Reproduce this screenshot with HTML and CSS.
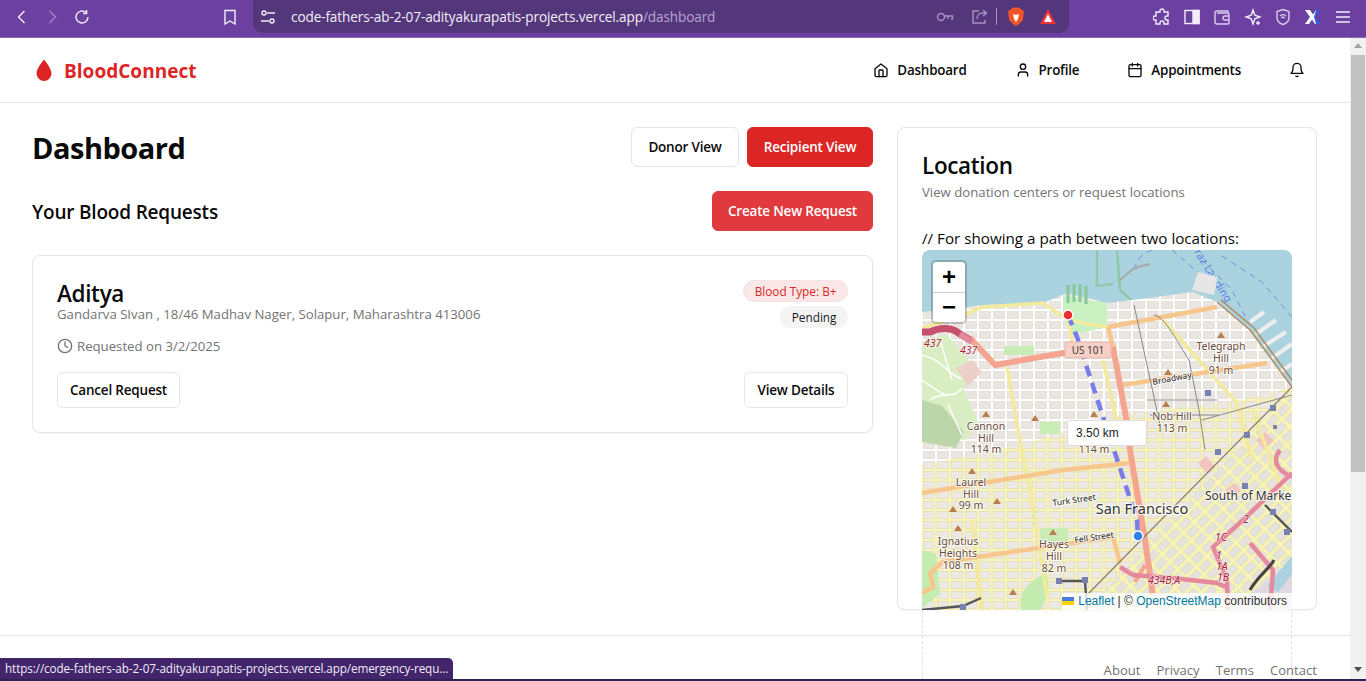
FILE: index.html
```html
<!DOCTYPE html>
<html lang="en">
<head>
<meta charset="utf-8">
<title>BloodConnect Dashboard</title>
<link rel="stylesheet" href="styles.css">
</head>
<body>
<div class="window">
  <div class="chrome">
    <div class="chrome-nav">
      <svg class="ci" viewBox="0 0 18 18"><path d="M11.5 3 5.5 9l6 6"/></svg>
      <svg class="ci dim" viewBox="0 0 18 18"><path d="M6.5 3l6 6-6 6"/></svg>
      <svg class="ci" viewBox="0 0 18 18"><path d="M15 9a6 6 0 1 1-2-4.5"/><path d="M13.5 2v3.5H10" class="solid"/></svg>
    </div>
    <svg class="ci bookmark" viewBox="0 0 18 18"><path d="M4 2.5h10v13.5l-5-3-5 3z"/></svg>
    <div class="omnibox">
      <svg class="ci tune" viewBox="0 0 18 18"><circle cx="5" cy="5" r="2"/><path d="M8 5h8M2 13h8"/><circle cx="13" cy="13" r="2"/></svg>
      <span class="url">code-fathers-ab-2-07-adityakurapatis-projects.vercel.app<span class="url-dim">/dashboard</span></span>
      <div class="omni-right">
        <svg class="ci dim2" viewBox="0 0 18 18"><circle cx="5" cy="9" r="3.5"/><path d="M8.5 8h8v3h-1.5M12 8v3"/></svg>
        <svg class="ci dim2 share" viewBox="0 0 18 18"><path d="M9 3H3v12h12v-3M7 11c0-4 3-6 6-6h3M13 2l3.500 3-3.500 3"/></svg>
        <span class="sep"></span>
        <svg class="brave" viewBox="0 0 18 20"><path d="M3 3l3-2.500h6l3 2.500 2 1-1 9-4 4-3 2-3-2-4-4-1-9z" fill="#f0562a"/><path d="M6 7l3 1 3-1-1 5-2 3-2-3z" fill="#fff"/></svg>
        <svg class="tri" viewBox="0 0 18 18"><path d="M9 1l8 15H1z" fill="#e8343a"/><path d="M9 6l4 8H5z" fill="#fff"/></svg>
      </div>
    </div>
    <div class="chrome-tools">
      <svg class="ci" viewBox="0 0 18 18"><path d="M7 3a2 2 0 0 1 4 0v1h4v4h-1a2 2 0 0 0 0 4h1v4h-4v-1a2 2 0 0 0-4 0v1H3v-4H2a2 2 0 0 1 0-4h1V4h4z"/></svg>
      <svg class="ci" viewBox="0 0 18 18"><rect x="2" y="2.500" width="14" height="13"/><rect x="10" y="2.500" width="6" height="13" class="fill"/></svg>
      <svg class="ci dim3" viewBox="0 0 18 18"><path d="M15 5V3H4a2 2 0 0 0-2 2v9a2 2 0 0 0 2 2h11a1 1 0 0 0 1-1V6a1 1 0 0 0-1-1H4"/><path d="M16 8h-4a2 2 0 0 0 0 4h4"/></svg>
      <svg class="ci" viewBox="0 0 18 18"><path d="M9 2l1.800 5.200L16 9l-5.200 1.800L9 16l-1.800-5.200L2 9l5.200-1.800zM14 13v4M12 15h4"/></svg>
      <svg class="ci dim3" viewBox="0 0 18 18"><path d="M9 1.500l6 2v6c0 3.500-3 6-6 7-3-1-6-3.500-6-7v-6z"/><path d="M6 8a4 4 0 0 1 6 0M7.500 10a2 2 0 0 1 3 0"/></svg>
      <svg class="xlogo" viewBox="0 0 18 18"><path d="M1 2h5l3 4.500L12 2h3l-5 7 5 7h-4L8 11.500 5 16H1l5-7z" fill="#fff"/><path d="M12 2h4l-4 7 4 7h-4l-2-7z" fill="#3a5bd9"/></svg>
      <svg class="ci" viewBox="0 0 18 18"><path d="M2 4h14M2 9h14M2 14h14"/></svg>
    </div>
  </div>

  <div class="viewport">
    <div class="page">
      <header class="site-header">
        <div class="brand">
          <svg class="drop" viewBox="0 0 24 24"><path d="M12 1.500C12 1.500 4.500 10 4.500 15.500a7.500 7.500 0 0 0 15 0C19.500 10 12 1.500 12 1.500z"/></svg>
          <span>BloodConnect</span>
        </div>
        <nav class="nav">
          <a class="nav-link"><svg class="lucide" viewBox="0 0 24 24"><path d="m3 10 9-7 9 7v10a2 2 0 0 1-2 2H5a2 2 0 0 1-2-2z"/><path d="M9 22v-9a1 1 0 0 1 1-1h4a1 1 0 0 1 1 1v9"/></svg>Dashboard</a>
          <a class="nav-link"><svg class="lucide" viewBox="0 0 24 24"><circle cx="12" cy="7" r="4"/><path d="M19 21v-2a4 4 0 0 0-4-4H9a4 4 0 0 0-4 4v2"/></svg>Profile</a>
          <a class="nav-link"><svg class="lucide" viewBox="0 0 24 24"><rect x="3" y="4" width="18" height="18" rx="2"/><path d="M8 2v4M16 2v4M3 10h18"/></svg>Appointments</a>
          <svg class="lucide bell" viewBox="0 0 24 24"><path d="M6 8a6 6 0 0 1 12 0c0 7 3 9 3 9H3s3-2 3-9"/><path d="M10.300 21a1.940 1.940 0 0 0 3.400 0"/></svg>
        </nav>
      </header>

      <main class="main">
        <section class="left">
          <div class="row title-row">
            <h1>Dashboard</h1>
            <div class="btn-group">
              <button class="btn outline tall donor">Donor View</button>
              <button class="btn solid tall recipient">Recipient View</button>
            </div>
          </div>
          <div class="row requests-row">
            <h2>Your Blood Requests</h2>
            <button class="btn solid-light tall create">Create New Request</button>
          </div>
          <article class="request">
            <div class="request-top">
              <div>
                <h3>Aditya</h3>
                <p class="address">Gandarva SIvan , 18/46 Madhav Nager, Solapur, Maharashtra 413006</p>
              </div>
              <div class="badges">
                <span class="badge red">Blood Type: B+</span>
                <span class="badge gray">Pending</span>
              </div>
            </div>
            <p class="when"><svg class="lucide clock" viewBox="0 0 24 24"><circle cx="12" cy="12" r="10"/><path d="M12 6v6l4 2"/></svg>Requested on 3/2/2025</p>
            <div class="row request-actions">
              <button class="btn outline short cancel">Cancel Request</button>
              <button class="btn outline short details">View Details</button>
            </div>
          </article>
        </section>

        <aside class="location">
          <h3 class="loc-title">Location</h3>
          <p class="loc-sub">View donation centers or request locations</p>
          <p class="loc-note">// For showing a path between two locations:</p>
          <div class="map">
            <svg class="map-svg" viewBox="0 0 370 360">
              <defs>
                <pattern id="gridWhite" width="14" height="10" patternUnits="userSpaceOnUse">
                  <rect width="14" height="10" fill="#ffffff"/>
                  <rect x="1.500" y="1.500" width="11" height="7" fill="#e9e5df" stroke="#d9d0c9" stroke-width=".5"/>
                </pattern>
                <pattern id="gridYellow" width="14" height="10" patternUnits="userSpaceOnUse">
                  <rect width="14" height="10" fill="#f7f4b4"/>
                  <rect x="1.500" y="1.500" width="11" height="7" fill="#ece8e2" stroke="#d9d0c9" stroke-width=".5"/>
                </pattern>
                <pattern id="gridDiag" width="15" height="11" patternUnits="userSpaceOnUse" patternTransform="rotate(-45)">
                  <rect width="15" height="11" fill="#f7f4b4"/>
                  <rect x="2" y="2" width="11" height="7" fill="#e6e3dd" stroke="#d5cdc6" stroke-width=".5"/>
                </pattern>
              </defs>
              <rect width="370" height="360" fill="#aad3df"/>
              <g class="ferry">
                <path d="M230 0c-14 6-20 14-14 24M280 10l30 30 15 30M300 6l40 26 30 35M250 0l28 24"/>
              </g>
              <text class="bay" transform="translate(272 2) rotate(58)">raz Landing</text>
              <path d="M175 0v36M195 0l3 40M175 36l16-2M198 40l22 20" class="breakwater"/>
              <path d="M198 30l14-12 16-4" class="pier"/>
              <path d="M270 40l6-18 20 5-4 18z" fill="#e6e6e6"/>
              <g class="docks">
                <path d="M328 72l14-10M334 84l20-14M342 96l22-14M350 108l20-14M358 122l12-8"/>
              </g>
              <path d="M0 62 61 55 121 53 145 43 185 53 211 50 271 42 295 52 328 80 370 137V360H0z" fill="url(#gridWhite)"/>
              <path d="M0 215 100 195 200 165 320 150 370 137V360H0z" fill="url(#gridYellow)"/>
              <path d="M165 360 370 140V360z" fill="url(#gridDiag)"/>
              <path d="M141 45l44 8v24l-36 8-8-20z" fill="#c8f0c0"/>
              <path d="M146 35v18M152 34v18M158 34v18M164 36v18" class="pier-green"/>
              <path d="M0 92l24-8 26 30-8 26 14 32-12 18-44-6z" fill="#d8eec2"/>
              <path d="M0 150l20 6 22 26-8 16-34-6z" fill="#bcd6aa"/>
              <path d="M34 118l16-8 10 12-14 14z" fill="#eccfc9"/>
              <path d="M0 105c20 4 26 20 40 24M8 150c14-10 24 0 32-12M18 90l12 40M40 185l-14-30M0 130l24 16" class="white-road"/>
              <path d="M82 96h30v9H82zM118 278h28v14h-28zM118 172h20v12h-20z" fill="#c9ebb6"/>
              <path d="M0 300l14 4 4 40-18 14zM98 350c4-14 14-22 26-26 6 12 0 26-6 36H99z" fill="#c4ecb0"/>
              <path d="M334 190l10-8 8 9-10 8zM276 213l8-7 9 11-8 7zM303 240l9-7 7 8-9 7z" fill="#f1c4c0"/>
              <path d="M310 360l60-50v50z" fill="#dfd9e2"/>
              <path d="M345 336l25-30v18l-14 18z" fill="#aad3df"/>

              <g class="yellow-road">
                <path d="M0 78 38 66 61 57 121 53 143 68 160 73 186 77"/>
                <path d="M85 117 98 190 108 240 125 347"/>
                <path d="M181 110 198 187"/>
                <path d="M241 70 315 153 330 210"/>
                <path d="M330 160 360 240"/>
                <path d="M146 70 152 100"/>
                <path d="M60 360 50 270"/>
              </g>
              <g class="orange-road">
                <path d="M186 77 295 57"/>
                <path d="M200 135 345 113"/>
                <path d="M0 243 141 220 208 213"/>
                <path d="M0 343 11 337 8 323 21 312 191 287 198 313"/>
              </g>
              <path d="M48 88 73 115 141 103 191 97 205 173 208 200 223 290 231 345" class="salmon-road"/>
              <path d="M186 77 191 97" class="orange-link"/>
              <path d="M223 315 213 332" class="salmon-thin"/>
              <path d="M0 82h8c10-5 22-5 30 2l10 6" class="moto-dark"/>
              <path d="M38 84 50 92" class="moto"/>
              <g class="moto">
                <path d="M370 223 321 270 291 297 305 330 306 360"/>
                <path d="M358 200c-8 10-4 20 12 27"/>
                <path d="M198 317 211 325 250 328 295 333 306 338"/>
                <path d="M328 293 351 320 348 360"/>
              </g>
              <g class="rail">
                <path d="M295 52 328 80 370 137"/>
                <path d="M299 50 332 78 370 130"/>
              </g>
              <path d="M165 345 370 137" class="diagonal-tan"/>
              <g class="transit-thin">
                <path d="M212 55l26 120M232 65c10 0 25 30 35 45l10 50 6 40M225 150h70M228 165h68M280 170l90-25"/>
              </g>
              <g class="transit">
                <path d="M343 255 370 282M137 331H163M163 331 165 360M0 360l41-4 18-8"/>
                <path d="M328 340c8-14 20-22 24-30" class="transit-x"/>
              </g>
              <g class="stations">
                <rect x="283" y="140" width="6" height="6"/><rect x="348" y="155" width="6" height="6"/><rect x="322" y="182" width="6" height="6"/><rect x="351" y="175" width="4" height="4"/><rect x="293" y="199" width="6" height="6"/><rect x="320" y="233" width="6" height="6"/><rect x="348" y="259" width="6" height="6"/><rect x="362" y="279" width="6" height="6"/><rect x="134" y="328" width="6" height="6"/><rect x="160" y="327" width="6" height="6"/><rect x="38" y="354" width="6" height="6"/>
              </g>
              <g class="hills">
                <path d="M64 161l4 6h-8zM113 165l4 6h-8zM172 161l4 6h-8zM244 151l4 6h-8zM246 119l4 6h-8zM299 82l4 6h-8zM50 218l4 6h-8zM75 248l4 6h-8zM31 256l4 6h-8zM36 275l4 6h-8zM131 279l4 6h-8zM91 339l4 6h-8z"/>
              </g>
              <path d="M146 65 155 87 181 167 193 203 215 270 216 286" class="route"/>

              <g class="labels">
                <text x="64" y="180">Cannon</text><text x="64" y="192">Hill</text><text x="64" y="203">114 m</text>
                <text x="299" y="100">Telegraph</text><text x="299" y="112">Hill</text><text x="299" y="124">91 m</text>
                <text x="250" y="170">Nob Hill</text><text x="250" y="182">113 m</text>
                <text x="172" y="203">114 m</text>
                <text x="49" y="236">Laurel</text><text x="49" y="248">Hill</text><text x="49" y="259">99 m</text>
                <text x="36" y="295">Ignatius</text><text x="36" y="307">Heights</text><text x="36" y="319">108 m</text>
                <text x="132" y="298">Hayes</text><text x="132" y="310">Hill</text><text x="132" y="322">82 m</text>
              </g>
              <g class="streets">
                <text transform="translate(231 135) rotate(-11)">Broadway</text>
                <text transform="translate(131 256) rotate(-8)">Turk Street</text>
                <text transform="translate(153 293) rotate(-8)">Fell Street</text>
              </g>
              <g class="moto-labels">
                <text x="2" y="97" class="hwy">437</text>
                <text x="38" y="104" class="hwy">437</text>
                <text x="226" y="334" class="hwy">434B;A</text>
                <text x="293" y="291">1C</text><text x="294" y="309">1</text><text x="294" y="320">1A</text><text x="295" y="331">1B</text><text x="321" y="273">2</text>
              </g>
              <g class="shield"><rect x="143" y="92" width="46" height="16" rx="2"/><text x="166" y="104">US 101</text></g>
              <text x="220" y="264" class="city">San Francisco</text>
              <text x="283" y="250" class="district">South of Market</text>
              <circle cx="146" cy="65" r="5" class="pin-red"/>
              <circle cx="216" cy="286" r="5" class="pin-blue"/>
            </svg>
            <div class="zoom">
              <button class="zoom-btn">+</button>
              <button class="zoom-btn">−</button>
            </div>
            <div class="distance">3.50 km</div>
            <div class="attribution"><svg class="flag" viewBox="0 0 12 8"><rect width="12" height="4" fill="#4C7BE1"/><rect y="4" width="12" height="4" fill="#FFD500"/></svg><a>Leaflet</a> | © <a>OpenStreetMap</a> contributors</div>
          </div>
          <div class="map-ghost"></div>
        </aside>
      </main>

      <footer class="site-footer">
        <a>About</a><a>Privacy</a><a>Terms</a><a>Contact</a>
      </footer>
    </div>
    <div class="scrollbar">
      <span class="arrow up"></span>
      <div class="thumb"></div>
      <span class="arrow down"></span>
    </div>
    <div class="status">https://code-fathers-ab-2-07-adityakurapatis-projects.vercel.app/emergency-requ...</div>
  </div>
  <div class="taskline"></div>
</div>
</body>
</html>
```
FILE: styles.css
```css
* { box-sizing: border-box; }
html, body { margin: 0; height: 100%; overflow: hidden; background: #fff; }
body { font-family: "Open Sans", "Noto Sans", sans-serif; color: #0a0a0a; }
h1, h2, h3, p { margin: 0; }
.window { width: 1366px; height: 681px; display: flex; flex-direction: column; }

/* browser chrome */
.chrome { height: 38px; flex: none; background: #6b40a0; display: flex; align-items: flex-start; border-bottom: 1px solid #8a68b4; }
.ci { width: 18px; height: 18px; fill: none; stroke: #f2edf8; stroke-width: 1.4; flex: none; }
.ci .solid { stroke-width: 1.600; }
.ci .fill { fill: #f2edf8; }
.ci.dim { stroke: #9f86c4; }
.ci.dim2 { stroke: #a592c0; }
.ci.dim3 { stroke: #d9cdea; }
.chrome-nav { display: flex; gap: 12px; padding: 8px 0 0 13px; width: 221px; flex: none; }
.bookmark { margin-top: 8px; flex: none; }
.omnibox { margin-left: 14px; width: 816px; height: 33px; background: #54367b; border-radius: 0 0 10px 10px; display: flex; align-items: center; padding: 0 12px 0 6px; flex: none; }
.tune { margin-right: 14px; }
.url { font-size: 13.6px; color: #f3eff8; letter-spacing: -.12px; white-space: nowrap; }
.url-dim { color: #b6a5cf; }
.omni-right { margin-left: auto; display: flex; align-items: center; }
.share { margin-left: 16px; }
.sep { width: 1px; height: 17px; background: #a592c0; margin: 0 10px 0 8px; }
.brave { width: 18px; height: 20px; }
.tri { width: 18px; height: 18px; margin-left: 14px; }
.chrome-tools { display: flex; gap: 12.2px; padding: 8px 0 0 84px; }
.xlogo { width: 18px; height: 18px; }

/* viewport */
.viewport { flex: 1; min-height: 0; display: flex; position: relative; }
.page { width: 1350px; flex: none; display: flex; flex-direction: column; min-height: 0; overflow: hidden; }
.scrollbar { width: 16px; flex: none; background: #f1f1f1; display: flex; flex-direction: column; align-items: center; }
.thumb { width: 14px; height: 417px; background: #c1c1c1; margin-top: 7px; }
.arrow { width: 0; height: 0; border-left: 4px solid transparent; border-right: 4px solid transparent; margin-top: 5px; }
.arrow.up { border-bottom: 5px solid #a3a3a3; }
.arrow.down { border-top: 5px solid #505050; margin-top: auto; margin-bottom: 7px; }
.status { position: absolute; left: 0; bottom: 0; width: 453px; height: 21px; background: #42256b; color: #f1ecf7; font-size: 11.7px; line-height: 21px; padding-left: 5px; border-radius: 0 5px 0 0; white-space: nowrap; overflow: hidden; letter-spacing: -.1px; }
.taskline { height: 2px; flex: none; background: #2d2158; }

/* header */
.site-header { height: 65px; flex: none; border-bottom: 1px solid #e5e5e5; display: flex; align-items: center; justify-content: space-between; padding: 0 45px 0 32px; }
.brand { display: flex; align-items: center; gap: 8px; color: #dc2626; font-size: 19px; font-weight: 700; letter-spacing: .02px; padding-top: 1px; }
.drop { width: 24px; height: 24px; fill: #dc2626; margin-top: -1px; }
.nav { display: flex; align-items: center; }
.nav-link { display: flex; align-items: center; gap: 8px; font-size: 13.4px; font-weight: 600; color: #0a0a0a; letter-spacing: -.2px; }
.nav-link:nth-child(1) { margin-right: 48px; }
.nav-link:nth-child(2) { margin-right: 48px; }
.nav-link:nth-child(3) { margin-right: 48px; }
.lucide { width: 16px; height: 16px; fill: none; stroke: currentColor; stroke-width: 2; stroke-linecap: round; stroke-linejoin: round; flex: none; }
.bell { color: #0a0a0a; }

/* main */
.main { flex: 1; min-height: 0; display: grid; grid-template-columns: 841px 420px; gap: 24px; padding: 24px 0 0 32px; align-items: start; }
.row { display: flex; align-items: center; justify-content: space-between; }
.title-row { height: 40px; margin-bottom: 24px; }
h1 { font-size: 29px; font-weight: 700; letter-spacing: -.5px; }
.requests-row { height: 40px; margin-bottom: 24px; }
h2 { font-size: 19px; font-weight: 600; letter-spacing: -.2px; margin-top: 2px; }
.btn-group { display: flex; gap: 8px; }
.btn { font-family: inherit; font-size: 13.5px; font-weight: 600; border-radius: 6px; border: 1px solid #e5e5e5; background: #fff; color: #0a0a0a; padding: 0; letter-spacing: -.2px; white-space: nowrap; }
.tall { height: 40px; }
.short { height: 36px; }
.solid { background: #dc2626; border-color: #dc2626; color: #fff; }
.solid-light { background: #e0393e; border-color: #e0393e; color: #fff; }
.donor { width: 108px; }
.recipient { width: 126px; }
.create { width: 161px; }
.cancel { width: 123px; }
.details { width: 104px; }

/* request card */
.request { height: 178px; border: 1px solid #e5e5e5; border-radius: 8px; padding: 24px; box-shadow: 0 1px 2px rgba(0,0,0,.04); }
.request-top { display: flex; justify-content: space-between; height: 50px; }
.request h3 { font-size: 22.5px; font-weight: 600; line-height: 28px; letter-spacing: -.35px; margin-bottom: -2px; }
.address { font-size: 13.2px; color: #737373; line-height: 16px; white-space: nowrap; }
.badges { display: flex; flex-direction: column; align-items: flex-end; gap: 4px; }
.badge { height: 22px; border-radius: 11px; font-size: 11.8px; font-weight: 500; line-height: 22px; padding: 0 11.5px; white-space: nowrap; }
.badge.red { background: #fae8e8; color: #dc2626; border: 1px solid #f5e3e3; line-height: 20px; padding: 0 10.5px; }
.badge.gray { background: #f4f4f5; color: #18181b; }
.when { display: flex; align-items: center; gap: 4px; font-size: 13.2px; color: #737373; height: 20px; margin-top: 6px; }
.clock { color: #737373; }
.request-actions { margin-top: 16px; }

/* location card */
.location { height: 483px; width: 420px; border: 1px solid #e5e5e5; border-radius: 8px; padding: 24px; box-shadow: 0 1px 2px rgba(0,0,0,.04); }
.loc-title { font-size: 22.5px; font-weight: 600; line-height: 28px; letter-spacing: -.35px; }
.loc-sub { font-size: 13.2px; color: #737373; line-height: 20px; margin-top: 2px; }
.loc-note { font-size: 15.2px; line-height: 22px; margin-top: 25px; white-space: nowrap; }
.map { width: 370px; height: 360px; margin-top: 1px; position: relative; overflow: hidden; border-radius: 8px 8px 0 0; }
.map-svg { display: block; width: 370px; height: 360px; font-family: "Noto Sans", sans-serif; }
.map-ghost { width: 370px; height: 70px; border: 1px dashed #e3dfe3; border-top: 0; border-bottom: 0; }

/* map ink */
.ferry { fill: none; stroke: #6f8fe0; stroke-width: 1; stroke-dasharray: 6 5; }
.bay { font-size: 11px; fill: #5f7fe0; }
.breakwater { fill: none; stroke: #8fc9a8; stroke-width: 2.500; }
.pier { fill: none; stroke: #a9a9a9; stroke-width: 2; }
.pier-green { fill: none; stroke: #86c89a; stroke-width: 3; }
.docks { fill: none; stroke: #eeeeee; stroke-width: 4; }
.white-road { fill: none; stroke: #fff; stroke-width: 1.500; }
.yellow-road path { fill: none; stroke: #f2ea9c; stroke-width: 3.500; }
.orange-road path { fill: none; stroke: #f6c68c; stroke-width: 4.500; }
.orange-link { fill: none; stroke: #f6c68c; stroke-width: 4.500; }
.salmon-road { fill: none; stroke: #f4a48f; stroke-width: 6; stroke-linejoin: round; }
.salmon-thin { fill: none; stroke: #f4a48f; stroke-width: 4; }
.moto path { fill: none; stroke: #e5899e; stroke-width: 4.500; }
path.moto { fill: none; stroke: #e5899e; stroke-width: 6; }
.moto-dark { fill: none; stroke: #c6506e; stroke-width: 7; }
.rail path { fill: none; stroke: #b38b5c; stroke-width: 1.500; }
.diagonal-tan { fill: none; stroke: #8b7a62; stroke-width: 1.200; }
.transit-thin path { fill: none; stroke: #7d7d84; stroke-width: .9; }
.transit path { fill: none; stroke: #55565b; stroke-width: 2.400; }
.transit .transit-x { stroke: #444; stroke-width: 3; }
.stations rect { fill: #7981b1; }
.hills path { fill: #b87f4c; }
.route { fill: none; stroke: #7a7ceb; stroke-width: 4.500; stroke-dasharray: 11 7; }
.labels text { font-size: 10.5px; fill: #6a4c3c; text-anchor: middle; paint-order: stroke; stroke: rgba(255,255,255,.75); stroke-width: 2px; }
.streets text { font-size: 8.5px; fill: #222; paint-order: stroke; stroke: rgba(255,255,255,.8); stroke-width: 2px; }
.moto-labels text { font-size: 10.5px; font-style: italic; fill: #a81e3e; paint-order: stroke; stroke: rgba(255,255,255,.6); stroke-width: 1.500px; }
.shield rect { fill: #f6cfc6; stroke: #e8b8ac; stroke-width: 1; }
.shield text { font-size: 10px; fill: #3c3c3c; text-anchor: middle; }
.city { font-size: 14.500px; fill: #333; text-anchor: middle; paint-order: stroke; stroke: rgba(255,255,255,.8); stroke-width: 2.500px; }
.district { font-size: 12px; fill: #333; paint-order: stroke; stroke: rgba(255,255,255,.8); stroke-width: 2px; }
.pin-red { fill: #ef2f2f; stroke: #fff; stroke-width: 1.500; }
.pin-blue { fill: #2f7fec; stroke: #fff; stroke-width: 1.500; }

/* leaflet overlays */
.zoom { position: absolute; left: 11px; top: 12px; width: 32px; height: 60px; background: #fff; border-radius: 3px; box-shadow: 0 0 0 2px rgba(0,0,0,.2); display: flex; flex-direction: column; }
.zoom-btn { flex: 1; border: 0; background: transparent; padding: 0; font-family: "Liberation Sans", sans-serif; font-size: 24px; font-weight: 700; line-height: 1; color: #000; }
.zoom-btn:first-child { border-bottom: 1px solid #ccc; }
.distance { position: absolute; left: 145px; top: 170px; width: 80px; height: 26px; background: #fff; border-radius: 3px; border: 1px solid #ddd; font-family: "Liberation Sans", sans-serif; font-size: 12px; line-height: 24px; padding-left: 8px; color: #222; }
.attribution { position: absolute; right: 0; top: 343px; height: 17px; width: 230px; background: rgba(255,255,255,.8); font-family: "Liberation Sans", sans-serif; font-size: 12px; line-height: 16px; color: #333; white-space: nowrap; text-align: right; padding-right: 5px; }
.attribution a { color: #0078a8; }
.flag { width: 12px; height: 8px; margin-right: 4px; }

/* footer */
.site-footer { height: 44px; flex: none; margin-top: auto; border-top: 1px solid #e5e5e5; display: flex; justify-content: flex-end; align-items: flex-start; gap: 16px; padding: 25px 33px 0 0; font-size: 13.1px; color: #737373; }
```
